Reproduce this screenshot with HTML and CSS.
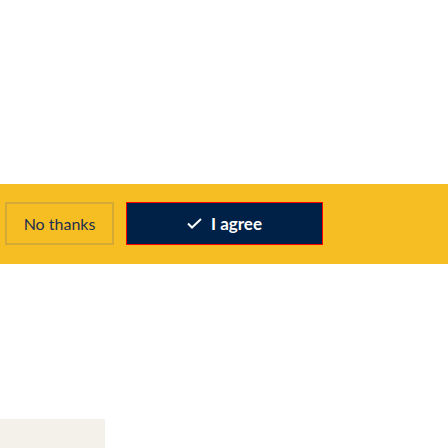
FILE: index.html
```html
<!DOCTYPE html>
<html>
<head>
<meta charset="utf-8">
<link rel="stylesheet" href="styles.css">
</head>
<body>
<div class="top"></div>
<div class="banner">
  <button class="btn btn-decline">No thanks</button>
  <button class="btn btn-agree">
    <svg class="check" width="15" height="11" viewBox="0 0 15 11"><path d="M1 5.5 L5 9.5 L14 1" fill="none" stroke="#fff" stroke-width="2"/></svg>
    <span>I agree</span>
  </button>
</div>
<div class="gap"></div>
<div class="footer-block"></div>
</body>
</html>
```
FILE: styles.css
```css
html, body {
  margin: 0;
  padding: 0;
  background: #fff;
  font-family: Lato, "Noto Sans", sans-serif;
}
.top {
  height: 184px;
}
.banner {
  height: 80px;
  box-sizing: border-box;
  background: #f6be22;
  padding: 18px 5px 0;
  display: flex;
  gap: 12px;
  align-items: flex-start;
}
.btn {
  height: 43px;
  box-sizing: border-box;
  font-family: Lato, "Noto Sans", sans-serif;
  margin: 0;
  display: flex;
  align-items: center;
  justify-content: center;
  cursor: pointer;
  padding: 0;
}
.btn-decline {
  width: 109px;
  background: transparent;
  border: 2px solid #d4a935;
  color: #1d2e4f;
  font-size: 16px;
  padding-bottom: 1px;
}
.btn-agree {
  width: 197px;
  background: #002147;
  border: 1px solid #ff0000;
  color: #fff;
  font-size: 17px;
  font-weight: 700;
  gap: 9px;
}
.check {
  display: block;
}
.gap {
  height: 155px;
}
.footer-block {
  width: 105px;
  height: 29px;
  background: #f4f1ea;
}
```
